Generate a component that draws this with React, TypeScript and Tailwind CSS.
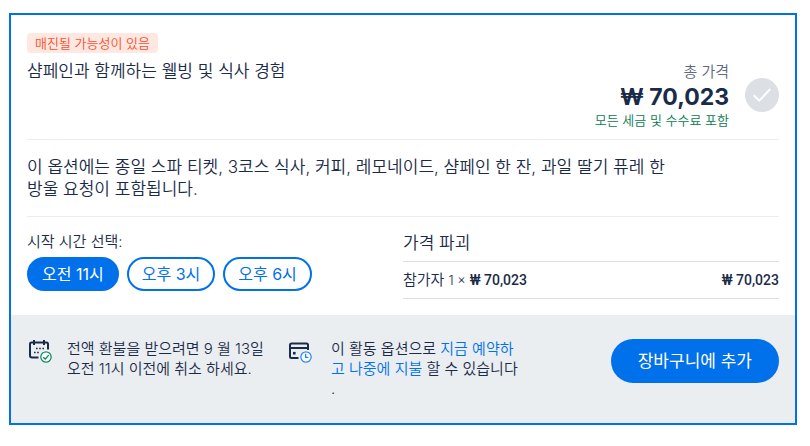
import { useState } from 'react'
import clsx from 'clsx'

const START_TIMES = ['오전 11시', '오후 3시', '오후 6시']

const PRICE = '₩ 70,023'

function CheckCircle() {
  return (
    <svg className="size-[34px] shrink-0" viewBox="0 0 34 34" fill="none" aria-hidden="true">
      <circle cx="17" cy="17" r="17" fill="#dcdfe4" />
      <path d="M8.7 17.3l5.6 5.4L25.3 11" stroke="#fff" strokeWidth="2" />
    </svg>
  )
}

function CalendarIcon() {
  return (
    <svg className="size-6 shrink-0" viewBox="0 0 24 24" fill="none" aria-hidden="true">
      <path d="M10.5 18.5H4a2 2 0 0 1-2-2V5a1.5 1.5 0 0 1 1.5-1.5h15A1.5 1.5 0 0 1 20 5v5.5" stroke="#1a2b49" strokeWidth="2" />
      <path d="M6 1v5M16 1v5" stroke="#1a2b49" strokeWidth="2" />
      <path d="M8 9.5h1.6M11.2 9.5h1.6M14.4 9.5H16M6 13.5h1.6M9.2 13.5h1.6" stroke="#1a2b49" strokeWidth="1.6" />
      <circle cx="18" cy="18" r="6.5" fill="#fff" />
      <circle cx="18" cy="18" r="5.2" stroke="#098a5b" strokeWidth="1.3" />
      <path d="M15.3 18.3l1.9 1.8 3.5-4" stroke="#098a5b" strokeWidth="1.4" />
    </svg>
  )
}

function CardIcon() {
  return (
    <svg className="size-6 shrink-0" viewBox="0 0 24 24" fill="none" aria-hidden="true">
      <path d="M10.5 19H3.5A1.5 1.5 0 0 1 2 17.5V6a1.5 1.5 0 0 1 1.5-1.5h15A1.5 1.5 0 0 1 20 6v5" stroke="#1a2b49" strokeWidth="2" />
      <path d="M2 9h18" stroke="#1a2b49" strokeWidth="2" />
      <path d="M5 14.2h2.6" stroke="#1a2b49" strokeWidth="2.6" />
      <circle cx="18" cy="18" r="6.5" fill="#fff" />
      <circle cx="18" cy="18" r="5.2" stroke="#2b86ee" strokeWidth="1.3" />
      <path d="M17.6 14.8v3.6h2.8" stroke="#2b86ee" strokeWidth="1.4" />
    </svg>
  )
}

export default function App() {
  const [time, setTime] = useState(START_TIMES[0])

  return (
    <div className="pt-[13px] pr-[13px] pb-5 pl-[9px] font-['Inter','Noto_Sans_CJK_KR',sans-serif] font-[350] text-[#1a2b49]">
      <article className="border-2 border-[#0071eb] bg-white">
        <div className="px-4 pt-[18px] pb-4">
          {/* Header */}
          <header className="flex justify-between gap-4 border-b border-[#ebeef1] pb-[11px]">
            <div>
              <span className="block w-fit rounded-[4px] bg-[#ffe8e1] px-2 text-[13px] leading-5 text-[#fc4f2d]">
                매진될 가능성이 있음
              </span>
              <h2 className="mt-[7px] text-[17px] leading-[22px] font-[350]">샴페인과 함께하는 웰빙 및 식사 경험</h2>
            </div>
            <div className="mt-[29px] flex items-center gap-4">
              <div className="text-right">
                <p className="text-[15px] leading-5 text-[#63687a]">총 가격</p>
                <p className="text-[23px] leading-[30px] font-bold">{PRICE}</p>
                <p className="text-[13px] leading-4 text-[#077a51]">모든 세금 및 수수료 포함</p>
              </div>
              <CheckCircle />
            </div>
          </header>

          {/* Description */}
          <div className="border-b border-[#ebeef1] py-4">
            <p className="max-w-[648px] text-[17px] leading-[22px]">
              이 옵션에는 종일 스파 티켓, 3코스 식사, 커피, 레모네이드, 샴페인 한 잔, 과일 딸기 퓨레 한 방울 요청이 포함됩니다.
            </p>
          </div>

          {/* Start time + price breakdown */}
          <div className="grid grid-cols-2 pt-[15px]">
            <section>
              <h3 className="text-[15px] leading-5 font-[350]">시작 시간 선택:</h3>
              <div className="mt-[5px] flex gap-2">
                {START_TIMES.map((t) => (
                  <button
                    key={t}
                    onClick={() => setTime(t)}
                    className={clsx(
                      'rounded-full border-2 border-[#0071eb] px-[13px] text-[16px] leading-[30px] font-normal',
                      t === time ? 'bg-[#0071eb] text-white' : 'bg-white text-[#0071eb]'
                    )}
                  >
                    {t}
                  </button>
                ))}
              </div>
            </section>
            <section>
              <h3 className="text-[17px] leading-[22px] font-[350]">가격 파괴</h3>
              <table className="mt-[7px] w-full border-y border-[#dcdfe4] text-[13px] leading-5">
                <tbody>
                  <tr>
                    <th scope="row" className="flex items-center gap-1 py-2 text-left font-[350]">
                      <span className="text-[15px]">참가자</span>
                      <span>1 ×</span>
                      <span className="font-['Roboto','Noto_Sans_CJK_KR',sans-serif] text-[14px] font-medium">{PRICE}</span>
                    </th>
                    <td className="py-2 text-right font-['Roboto','Noto_Sans_CJK_KR',sans-serif] text-[14px] font-medium">
                      {PRICE}
                    </td>
                  </tr>
                </tbody>
              </table>
            </section>
          </div>
        </div>

        {/* Footer */}
        <footer className="flex items-start bg-[#ebeef1] py-6 pr-4 pl-[17px] text-[15px] leading-5">
          <CalendarIcon />
          <p className="ml-[15px] w-[200px]">전액 환불을 받으려면 9 월 13일 오전 11시 이전에 취소 하세요.</p>
          <div className="ml-[21px] flex gap-[19px]">
            <CardIcon />
            <p className="w-[190px] [line-break:anywhere]">
              이 활동 옵션으로 <a href="#reserve" className="text-[#0071eb]">지금 예약하고 나중에 지불</a> 할 수 있습니다.
            </p>
          </div>
          <button className="ml-auto h-11 rounded-full bg-[#0071eb] px-[27px] text-[17px] font-normal text-white">
            장바구니에 추가
          </button>
        </footer>
      </article>
    </div>
  )
}
